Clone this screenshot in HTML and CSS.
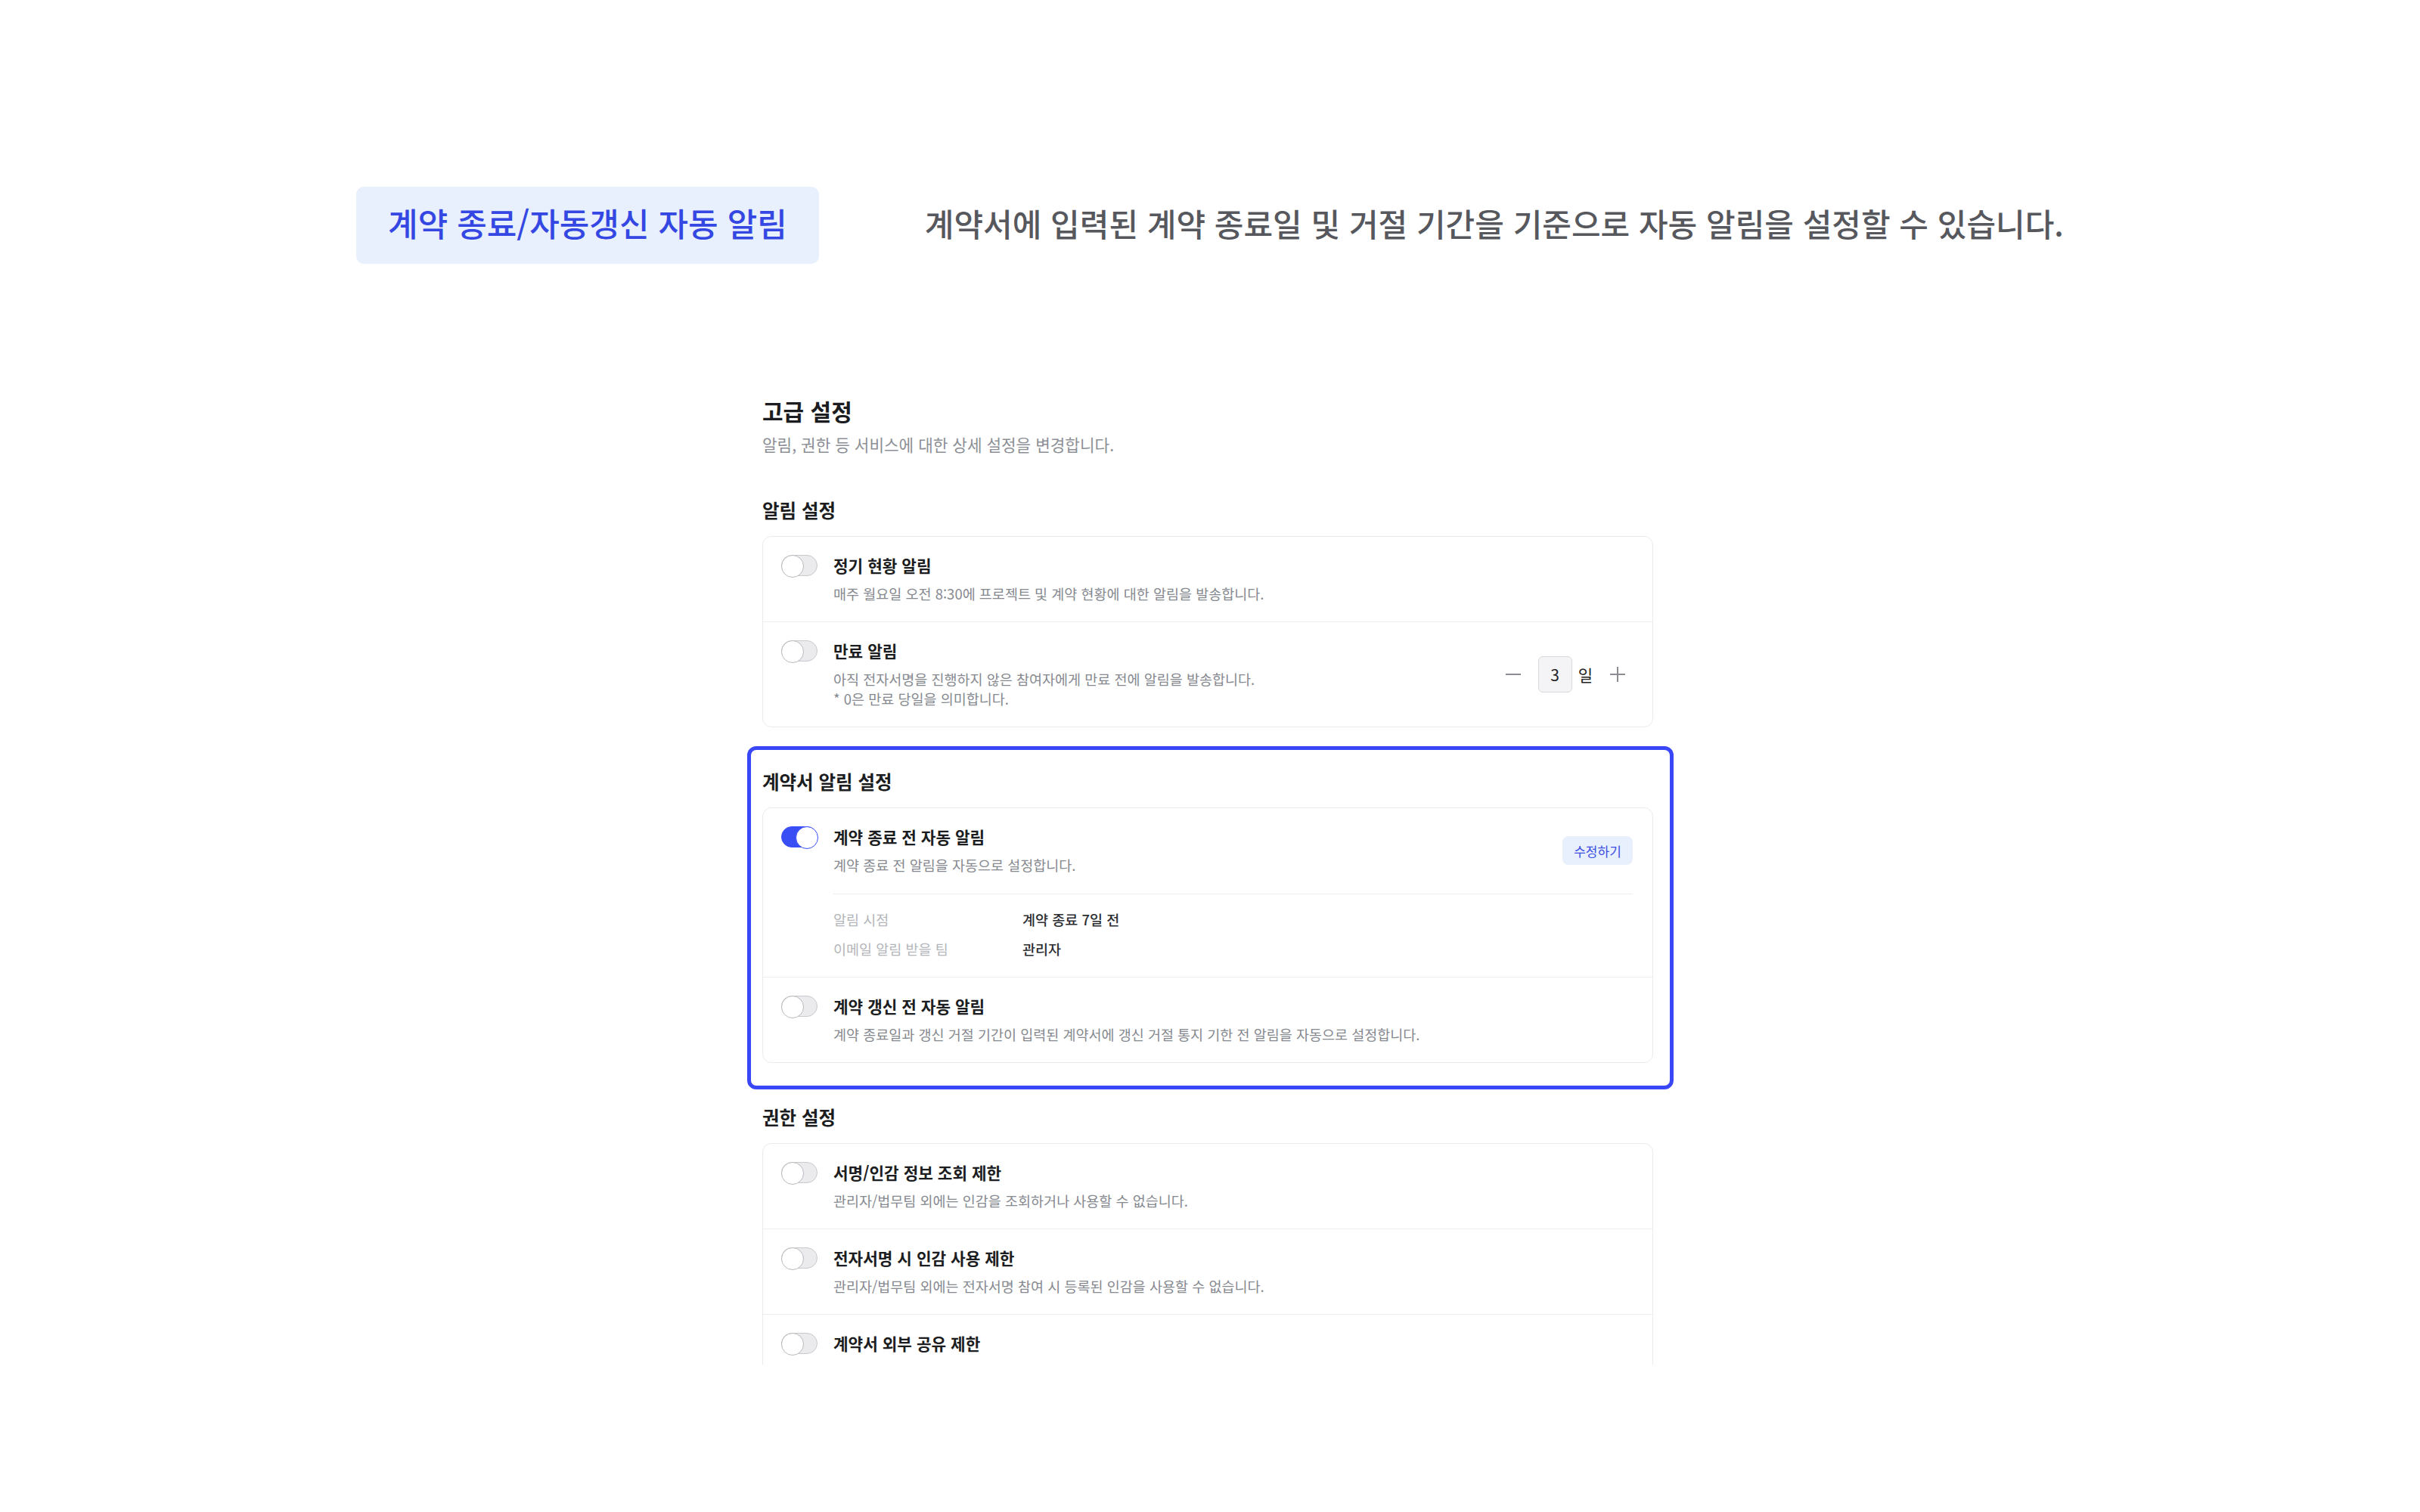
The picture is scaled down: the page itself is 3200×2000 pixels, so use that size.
FILE: index.html
```html
<!DOCTYPE html>
<html lang="ko">
<head>
    <meta charset="UTF-8">
    <title>고급 설정</title>
    <link rel="stylesheet" href="styles.css">
</head>
<body>
<header class="hero">
    <div class="hero-tag">계약 종료/자동갱신 자동 알림</div>
    <p class="hero-text">계약서에 입력된 계약 종료일 및 거절 기간을 기준으로 자동 알림을 설정할 수 있습니다.</p>
</header>

<div class="frame">
    <h1 class="page-title">고급 설정</h1>
    <p class="page-sub">알림, 권한 등 서비스에 대한 상세 설정을 변경합니다.</p>

    <section class="group">
        <h2 class="group-title">알림 설정</h2>
        <div class="card">
            <div class="row">
                <div class="row-main">
                    <span class="toggle"></span>
                    <div class="row-text">
                        <div class="row-title">정기 현황 알림</div>
                        <div class="row-desc">매주 월요일 오전 8:30에 프로젝트 및 계약 현황에 대한 알림을 발송합니다.</div>
                    </div>
                </div>
            </div>
            <div class="row">
                <div class="row-main">
                    <span class="toggle"></span>
                    <div class="row-text">
                        <div class="row-title">만료 알림</div>
                        <div class="row-desc">아직 전자서명을 진행하지 않은 참여자에게 만료 전에 알림을 발송합니다.<br>* 0은 만료 당일을 의미합니다.</div>
                    </div>
                </div>
                <div class="stepper">
                    <button class="step-btn minus" aria-label="감소">
                        <svg width="22" height="22" viewBox="0 0 22 22"><line x1="1" y1="11" x2="21" y2="11" stroke="#8b8d93" stroke-width="2"/></svg>
                    </button>
                    <span class="step-value">3</span>
                    <span class="step-unit">일</span>
                    <button class="step-btn plus" aria-label="증가">
                        <svg width="22" height="22" viewBox="0 0 22 22"><line x1="1" y1="11" x2="21" y2="11" stroke="#8b8d93" stroke-width="2"/><line x1="11" y1="1" x2="11" y2="21" stroke="#8b8d93" stroke-width="2"/></svg>
                    </button>
                </div>
            </div>
        </div>
    </section>

    <section class="group highlight">
        <h2 class="group-title">계약서 알림 설정</h2>
        <div class="card">
            <div class="row row-stack">
                <div class="row-head">
                    <div class="row-main">
                        <span class="toggle on"></span>
                        <div class="row-text">
                            <div class="row-title">계약 종료 전 자동 알림</div>
                            <div class="row-desc">계약 종료 전 알림을 자동으로 설정합니다.</div>
                        </div>
                    </div>
                    <button class="edit-btn">수정하기</button>
                </div>
                <dl class="details">
                    <dt>알림 시점</dt>
                    <dd>계약 종료 7일 전</dd>
                    <dt>이메일 알림 받을 팀</dt>
                    <dd>관리자</dd>
                </dl>
            </div>
            <div class="row">
                <div class="row-main">
                    <span class="toggle"></span>
                    <div class="row-text">
                        <div class="row-title">계약 갱신 전 자동 알림</div>
                        <div class="row-desc">계약 종료일과 갱신 거절 기간이 입력된 계약서에 갱신 거절 통지 기한 전 알림을 자동으로 설정합니다.</div>
                    </div>
                </div>
            </div>
        </div>
    </section>

    <section class="group">
        <h2 class="group-title">권한 설정</h2>
        <div class="card">
            <div class="row">
                <div class="row-main">
                    <span class="toggle"></span>
                    <div class="row-text">
                        <div class="row-title">서명/인감 정보 조회 제한</div>
                        <div class="row-desc">관리자/법무팀 외에는 인감을 조회하거나 사용할 수 없습니다.</div>
                    </div>
                </div>
            </div>
            <div class="row">
                <div class="row-main">
                    <span class="toggle"></span>
                    <div class="row-text">
                        <div class="row-title">전자서명 시 인감 사용 제한</div>
                        <div class="row-desc">관리자/법무팀 외에는 전자서명 참여 시 등록된 인감을 사용할 수 없습니다.</div>
                    </div>
                </div>
            </div>
            <div class="row">
                <div class="row-main">
                    <span class="toggle"></span>
                    <div class="row-text">
                        <div class="row-title">계약서 외부 공유 제한</div>
                    </div>
                </div>
            </div>
        </div>
    </section>
</div>
</body>
</html>
```

FILE: styles.css
```css
* {
    box-sizing: border-box;
}

body {
    margin: 0;
    background: #fff;
    font-family: "Noto Sans CJK KR", "Noto Sans", sans-serif;
    color: #1c1d21;
}

.hero {
    display: flex;
    justify-content: center;
    align-items: center;
    gap: 140px;
    padding-top: 247px;
}

.hero-tag {
    height: 102px;
    padding: 0 42px;
    line-height: 94px;
    font-size: 43px;
    font-weight: 500;
    color: #3447e2;
    background: #e8f0fd;
    border-radius: 10px;
}

.hero-text {
    margin: 0 0 8px;
    font-size: 42px;
    font-weight: 500;
    color: #56585e;
}

.frame {
    width: 1258px;
    height: 1292px;
    margin: 164px auto 0;
    padding: 10px 43px 0 37px;
    overflow: hidden;
}

.page-title {
    margin: 0;
    font-size: 30px;
    line-height: 40px;
    font-weight: 700;
}

.page-sub {
    margin: 10px 0 0;
    font-size: 21.3px;
    line-height: 30px;
    color: #8c8f95;
}

.group {
    margin-top: 56px;
}

.group-title {
    margin: 0 0 18px;
    font-size: 24.5px;
    line-height: 32px;
    font-weight: 700;
}

.card {
    border: 1px solid #ebebee;
    border-radius: 12px;
}

.row {
    display: flex;
    align-items: center;
    justify-content: space-between;
    padding: 24px 26px 24px 24px;
    border-top: 1px solid #ededf0;
}

.row:first-child {
    border-top: 0;
}

.row-stack {
    display: block;
}

.row-head {
    display: flex;
    align-items: center;
    justify-content: space-between;
}

.row-main {
    display: flex;
    align-items: flex-start;
    gap: 21px;
}

.toggle {
    position: relative;
    flex: none;
    width: 48px;
    height: 28px;
    border: 1.5px solid #c9c9ce;
    border-radius: 14px;
    background: #ebebee;
}

.toggle::after {
    content: "";
    position: absolute;
    top: -1.5px;
    left: -1.5px;
    width: 28px;
    height: 28px;
    border: 1.5px solid #b9b9be;
    border-radius: 50%;
    background: #fff;
}

.toggle.on {
    border-color: #3a4ef5;
    background: #3a4ef5;
}

.toggle.on::after {
    left: auto;
    right: -1.5px;
    border-color: #3a4ef5;
}

.row-title {
    font-size: 21.3px;
    line-height: 28px;
    font-weight: 700;
    color: #1c1d21;
}

.row-desc {
    margin-top: 10px;
    font-size: 18.5px;
    line-height: 26px;
    color: #86898f;
}

.stepper {
    display: flex;
    align-items: center;
}

.step-btn {
    display: flex;
    align-items: center;
    justify-content: center;
    width: 40px;
    height: 40px;
    padding: 0;
    border: 0;
    background: none;
}

.step-btn.minus {
    margin-right: 13px;
}

.step-btn.plus {
    margin-left: 13px;
}

.step-value {
    width: 45px;
    height: 48px;
    line-height: 46px;
    text-align: center;
    font-size: 21px;
    color: #222;
    background: #f4f4f6;
    border: 1px solid #d9d9dd;
    border-radius: 6px;
}

.step-unit {
    margin-left: 8px;
    font-size: 21px;
    color: #222;
}

.edit-btn {
    width: 93px;
    height: 38px;
    padding: 0;
    border: 0;
    border-radius: 8px;
    background: #e8effd;
    color: #3a4fe0;
    font-family: inherit;
    font-size: 17px;
}

.details {
    display: grid;
    grid-template-columns: 250px 1fr;
    row-gap: 13px;
    margin: 25px 0 0 69px;
    padding-top: 20px;
    border-top: 1px solid #ededf0;
    font-size: 18.5px;
    line-height: 26px;
}

.details dt {
    color: #b4b6bb;
}

.details dd {
    margin: 0;
    font-weight: 500;
    color: #2b2d31;
}

.highlight {
    position: relative;
}

.highlight::after {
    content: "";
    position: absolute;
    top: -31px;
    left: -20px;
    right: -27px;
    bottom: -35px;
    border: 5px solid #3a47f6;
    border-radius: 12px;
    pointer-events: none;
}
```
